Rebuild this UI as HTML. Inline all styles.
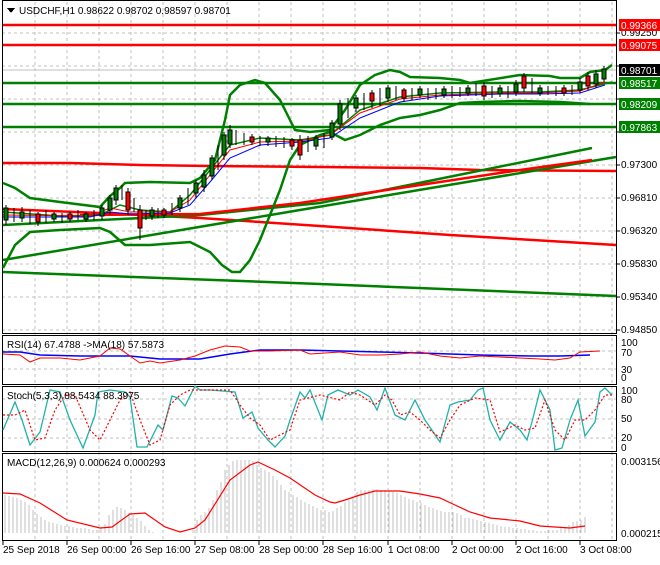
<!DOCTYPE html>
<html><head><meta charset="utf-8"><style>
body{margin:0;background:#fff;width:660px;height:560px;overflow:hidden;font-family:"Liberation Sans",sans-serif}
svg text{font-family:"Liberation Sans",sans-serif;font-size:10px}
</style></head><body>
<svg width="660" height="560" xmlns="http://www.w3.org/2000/svg" shape-rendering="crispEdges">
<rect width="660" height="560" fill="#fff"/>
<!-- grids -->
<g stroke="#c0c0c0" stroke-dasharray="3,3" stroke-width="1">
<path d="M35 2V540M67 2V540M99 2V540M131 2V540M163 2V540M195 2V540M227 2V540M259 2V540M291 2V540M323 2V540M355 2V540M388 2V540M420 2V540M452 2V540M484 2V540M516 2V540M548 2V540M580 2V540M612 2V540"/>
<path d="M2 33H616M2 66H616M2 99H616M2 132H616M2 165H616M2 198H616M2 231H616M2 264H616M2 297H616M2 330H616"/>
<path d="M2 351H616M2 369H616M2 399H616M2 419H616M2 438H616"/>
</g>
<line x1="2" y1="70" x2="616" y2="70" stroke="#c0c0c0"/>
<!-- pane borders -->
<g fill="none" stroke="#000" stroke-width="1">
<rect x="2.5" y="0.5" width="614" height="333"/>
<rect x="2.5" y="335.5" width="614" height="49"/>
<rect x="2.5" y="386.5" width="614" height="65"/>
<rect x="2.5" y="453.5" width="614" height="87"/>
</g>
<g shape-rendering="auto">
<!-- horizontal levels -->
<g stroke-width="2.5">
<line x1="3" y1="25" x2="616" y2="25" stroke="#f00"/>
<line x1="3" y1="45" x2="616" y2="45" stroke="#f00"/>
<line x1="3" y1="83" x2="616" y2="83" stroke="#008000"/>
<line x1="3" y1="104" x2="616" y2="104" stroke="#008000"/>
<line x1="3" y1="127" x2="616" y2="127" stroke="#008000"/>
</g>
<g fill="none" stroke-width="2.5">
<polyline stroke="#f00" points="3,163 70,163 140,165 210,166 320,167 420,168 480,170 616,171"/>
<polyline stroke="#f00" points="3,209 100,213 200,218 320,226 450,235 616,245"/>
<polyline stroke="#008000" points="3,272 320,284 616,296"/>
<polyline stroke="#008000" points="3,260 300,210 616,157"/>
<polyline stroke="#008000" points="3,225 200,215 320,203 592,148"/>
<polyline stroke="#f00" points="80,215 200,214 300,203 420,185 520,170 592,160"/>
<!-- bollinger -->
<polyline stroke="#008000" points="3,183 15,188 30,198 60,202 100,207 110,196 120,188 125,183 150,182 190,183 200,178 215,160 225,120 230,95 240,85 255,80 265,83 280,100 290,120 295,130 310,132 330,130 345,110 360,85 375,75 390,70 400,72 410,77 440,78 460,80 470,83 520,75 550,76 560,78 580,78 590,72 605,70 612,65"/>
<polyline stroke="#008000" points="3,268 15,245 30,232 60,230 100,228 110,232 125,245 150,245 190,242 210,252 222,265 232,272 240,272 250,260 260,240 270,215 280,190 290,160 300,145 320,135 330,132 345,140 360,135 380,125 400,118 420,115 440,110 460,103 480,102 520,101 560,102 590,104"/>
<polyline stroke="#008000" stroke-width="1.5" points="3,212 60,216 100,215 120,205 140,210 170,212 190,195 210,170 230,145 260,138 300,140 330,135 360,110 400,97 440,93 500,92 540,92 580,90 612,82"/>
</g>
<g fill="none" stroke-width="1">
<polyline stroke="#f00" points="3,215 90,216 110,208 130,212 170,212 190,200 210,175 230,150 260,142 300,141 330,135 360,113 400,99 440,95 500,93 540,93 580,91 605,82"/>
<polyline stroke="#00f" points="3,217 90,217 110,212 130,214 170,213 190,205 210,182 230,158 260,145 300,142 330,138 360,118 400,102 440,96 500,94 540,94 580,93 605,85"/>
</g>
<!-- candles -->
<g stroke="#000" stroke-width="1" fill="#008000">
<path fill="none" d="M6 205V225M14 208V222M22 207V222M30 210V224M38 212V226M46 210V223M54 212V222M62 213V223M70 212V222M78 210V220M86 212V222M94 210V220M102 205V220M110 195V215M116 185V205M122 185V200M128 188V215M134 198V212M140 205V240M146 210V220M152 207V220M158 208V218M164 208V218M172 203V215M180 195V212M188 188V205M196 180V198M204 170V192M212 155V180M218 145V170M224 132V160M230 125V148M236 130V145M244 133V145M252 134V145M260 136V146M268 136V146M276 136V147M284 137V148M292 138V150M300 135V160M308 136V152M316 135V150M324 133V148M332 120V140M340 100V130M348 98V118M356 95V112M364 93V110M372 90V108M380 88V106M388 85V102M396 86V100M404 88V102M412 88V100M420 86V98M428 88V100M436 88V99M444 86V98M452 86V98M460 87V97M468 85V96M476 83V96M484 82V100M492 86V98M500 85V97M508 86V98M516 80V96M524 73V92M532 78V93M540 85V96M548 86V95M556 86V96M564 85V96M572 85V95M580 78V93M588 72V90M596 70V88M604 66V82"/>
<rect x="4" y="208" width="4" height="12"/><rect x="20" y="212" width="4" height="6"/><rect x="36" y="214" width="4" height="8" fill="#f00"/><rect x="52" y="214" width="4" height="5"/><rect x="68" y="214" width="4" height="5" fill="#f00"/><rect x="84" y="214" width="4" height="5"/>
<rect x="100" y="208" width="4" height="8"/><rect x="108" y="198" width="4" height="12"/><rect x="114" y="188" width="4" height="12"/><rect x="126" y="192" width="4" height="18" fill="#f00"/><rect x="138" y="210" width="4" height="18" fill="#f00"/><rect x="150" y="210" width="4" height="6"/><rect x="162" y="210" width="4" height="5" fill="#f00"/><rect x="178" y="198" width="4" height="10"/><rect x="194" y="183" width="4" height="10"/><rect x="202" y="175" width="4" height="12"/><rect x="210" y="158" width="4" height="18"/><rect x="222" y="135" width="4" height="20"/><rect x="228" y="130" width="4" height="14"/><rect x="250" y="137" width="4" height="5" fill="#f00"/><rect x="266" y="138" width="4" height="4"/><rect x="290" y="140" width="4" height="6" fill="#f00"/><rect x="298" y="140" width="4" height="15" fill="#f00"/><rect x="314" y="138" width="4" height="8"/>
<rect x="330" y="123" width="4" height="14"/><rect x="338" y="104" width="4" height="20"/><rect x="354" y="98" width="4" height="10"/><rect x="370" y="93" width="4" height="8" fill="#f00"/><rect x="386" y="88" width="4" height="10"/><rect x="402" y="90" width="4" height="8" fill="#f00"/><rect x="418" y="89" width="4" height="6"/><rect x="442" y="89" width="4" height="6"/><rect x="466" y="88" width="4" height="5"/><rect x="482" y="86" width="4" height="10" fill="#f00"/><rect x="498" y="88" width="4" height="6"/><rect x="514" y="84" width="4" height="8"/><rect x="522" y="76" width="4" height="12" fill="#f00"/><rect x="538" y="88" width="4" height="5"/><rect x="562" y="88" width="4" height="5" fill="#f00"/><rect x="578" y="82" width="4" height="8"/><rect x="586" y="76" width="4" height="10" fill="#f00"/><rect x="594" y="74" width="4" height="10"/><rect x="602" y="69" width="4" height="10"/>
</g>
<!-- RSI -->
<polyline fill="none" stroke="#00f" stroke-width="1.5" points="3,352 20,352 40,355 80,356 130,356 160,359 200,359 230,354 260,350 300,350 340,351 380,352 420,353 480,355 530,356 560,356 590,355"/>
<polyline fill="none" stroke="#f00" stroke-width="1" points="3,354 20,355 30,362 40,358 60,358 80,360 90,358 100,356 110,348 120,349 130,356 140,363 150,361 160,363 180,360 195,356 210,350 225,346 240,347 250,351 270,351 300,350 310,354 340,352 360,355 380,355 400,354 420,352 440,356 460,358 480,356 500,357 520,358 540,359 555,360 570,358 580,352 600,351"/>
<!-- Stoch -->
<polyline fill="none" stroke="#20b2aa" stroke-width="1.3" points="3,430 15,402 22,420 30,445 40,432 50,390 60,392 70,420 83,448 95,415 98,392 110,390 125,392 130,397 137,447 147,447 158,425 163,430 172,396 178,398 185,406 195,386 200,390 210,390 235,392 243,418 252,412 258,428 268,440 275,447 285,436 290,420 300,392 305,398 310,390 322,420 328,395 338,390 350,395 358,390 370,397 377,410 385,388 395,415 405,420 415,400 425,420 440,442 450,405 458,402 470,400 478,390 483,388 490,420 500,440 510,422 520,430 527,440 533,418 540,390 550,410 555,450 562,448 570,420 578,400 585,436 595,422 600,392 605,388 612,395"/>
<polyline fill="none" stroke="#f00" stroke-width="1.2" stroke-dasharray="2,2" points="3,415 15,415 25,410 35,440 45,438 55,410 65,395 75,395 90,430 100,440 110,420 120,400 130,392 140,420 150,445 160,440 170,405 180,395 190,390 210,390 230,390 240,405 250,418 260,425 270,440 290,430 300,400 320,395 340,400 350,392 360,395 375,405 385,395 392,400 400,415 410,412 420,420 430,430 440,438 450,420 460,405 475,398 490,400 500,432 515,425 525,430 535,428 545,400 555,430 565,440 575,420 585,420 595,410 605,395 612,395"/>
<!-- MACD histogram -->
<path stroke="#c0c0c0" stroke-width="1" fill="none" shape-rendering="crispEdges" d="M5 533V495M9 533V496M13 533V497M17 533V498M21 533V500M25 533V502M29 533V505M33 533V510M37 533V514M41 533V517M45 533V520M49 533V522M53 533V523M57 533V524M61 533V525M65 533V526M69 533V526M73 533V527M77 533V528M81 533V528M85 533V528M89 533V529M93 533V530M97 533V530M101 533V528M105 533V524M109 533V515M113 533V510M117 533V507M121 533V508M125 533V510M129 533V513M133 533V515M137 533V518M141 533V521M145 533V526M149 533V530M153 533V532M193 533V530M197 533V520M201 533V515M205 533V512M209 533V508M213 533V500M217 533V490M221 533V482M225 533V470M229 533V465M233 533V461M237 533V460M241 533V460M245 533V460M249 533V460M253 533V461M257 533V465M261 533V468M265 533V470M269 533V472M273 533V476M277 533V480M281 533V485M285 533V490M289 533V492M293 533V495M297 533V497M301 533V500M305 533V502M309 533V504M313 533V506M317 533V508M321 533V510M325 533V510M329 533V512M333 533V511M337 533V508M341 533V506M345 533V502M349 533V500M353 533V497M357 533V492M361 533V490M365 533V490M369 533V490M373 533V489M377 533V489M381 533V490M385 533V490M389 533V491M393 533V492M397 533V493M401 533V495M405 533V497M409 533V499M413 533V500M417 533V502M421 533V503M425 533V505M429 533V507M433 533V508M437 533V510M441 533V511M445 533V512M449 533V512M453 533V512M457 533V513M461 533V515M465 533V518M469 533V518M473 533V519M477 533V520M481 533V521M485 533V522M489 533V523M493 533V524M497 533V525M501 533V526M505 533V527M509 533V527M513 533V528M517 533V528M521 533V529M525 533V529M529 533V530M533 533V530M537 533V531M541 533V531M545 533V531M549 533V530M553 533V530M557 533V530M561 533V528M565 533V527M569 533V525M573 533V522M577 533V521M581 533V520M585 533V517"/>
<polyline fill="none" stroke="#f00" stroke-width="1.2" points="3,493 20,494 40,503 67,520 100,528 112,527 130,514 145,513 165,527 180,532 195,528 205,520 230,480 250,465 258,462 275,470 290,478 315,495 330,502 335,503 345,500 360,495 375,491 400,491 420,494 440,498 455,505 470,512 490,518 520,521 540,526 570,528 585,526"/>
</g>
<!-- header -->
<path d="M7 8h8l-4 5z" fill="#000"/>
<text x="19" y="14" font-size="11" fill="#000">USDCHF,H1  0.98622 0.98702 0.98597 0.98701</text>
<text x="7" y="348" fill="#000">RSI(14) 67.4788  -&gt;MA(18) 57.5873</text>
<text x="7" y="399" fill="#000">Stoch(5,3,3) 88.5434 88.3975</text>
<text x="7" y="466" fill="#000">MACD(12,26,9) 0.000624 0.000293</text>
<!-- right axis -->
<g fill="#000">
<path d="M616 33h4M616 66h4M616 99h4M616 132h4M616 165h4M616 198h4M616 231h4M616 264h4M616 297h4M616 330h4" stroke="#000"/>
<text x="621" y="36">0.99250</text><text x="621" y="168">0.97300</text><text x="621" y="201">0.96810</text><text x="621" y="234">0.96320</text><text x="621" y="267">0.95830</text><text x="621" y="300">0.95340</text><text x="621" y="333">0.94850</text>
<text x="621" y="346">100</text><text x="621" y="356">70</text><text x="621" y="373">30</text><text x="621" y="381">0</text>
<text x="621" y="394">100</text><text x="621" y="403">80</text><text x="621" y="422">50</text><text x="621" y="441">20</text><text x="621" y="451">0</text>
<text x="621" y="465">0.003156</text><text x="621" y="537">0.000215</text>
</g>
<g font-size="10">
<rect x="619" y="19" width="41" height="12" fill="#f00"/><text x="621" y="29" fill="#fff">0.99366</text>
<rect x="619" y="39" width="41" height="12" fill="#f00"/><text x="621" y="49" fill="#fff">0.99075</text>
<rect x="619" y="64" width="41" height="12" fill="#000"/><text x="621" y="74" fill="#fff">0.98701</text>
<rect x="619" y="77" width="41" height="12" fill="#008000"/><text x="621" y="87" fill="#fff">0.98517</text>
<rect x="619" y="98" width="41" height="12" fill="#008000"/><text x="621" y="108" fill="#fff">0.98209</text>
<rect x="619" y="121" width="41" height="12" fill="#008000"/><text x="621" y="131" fill="#fff">0.97863</text>
</g>
<!-- bottom axis -->
<g fill="#000" stroke="#000">
<path d="M3 541v4M67 541v4M131 541v4M195 541v4M259 541v4M323 541v4M388 541v4M452 541v4M516 541v4M580 541v4"/>
</g>
<g fill="#000">
<text x="3" y="553">25 Sep 2018</text><text x="67" y="553">26 Sep 00:00</text><text x="131" y="553">26 Sep 16:00</text><text x="195" y="553">27 Sep 08:00</text><text x="259" y="553">28 Sep 00:00</text><text x="323" y="553">28 Sep 16:00</text><text x="388" y="553">1 Oct 08:00</text><text x="452" y="553">2 Oct 00:00</text><text x="516" y="553">2 Oct 16:00</text><text x="580" y="553">3 Oct 08:00</text>
</g>
</svg>
</body></html>
